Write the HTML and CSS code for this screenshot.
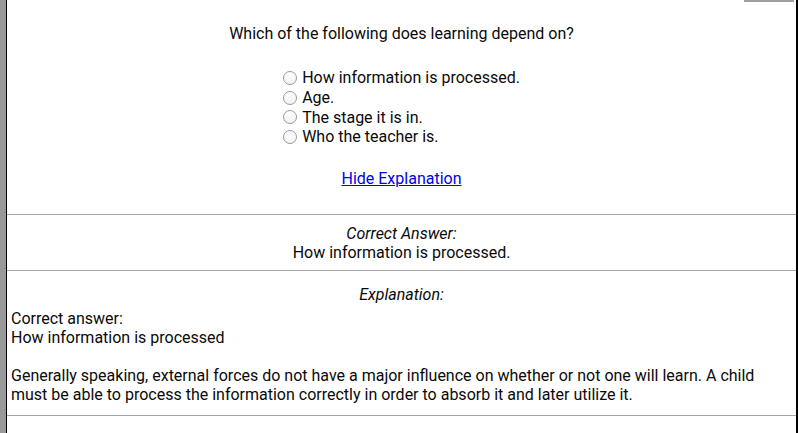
FILE: index.html
```html
<!DOCTYPE html>
<html>
<head>
<meta charset="utf-8">
<link rel="stylesheet" href="styles.css">
</head>
<body>
<div class="page">
  <div class="gutter"></div>
  <main class="main">
    <div class="scroll-thumb"></div>
    <section class="question">
      <p class="prompt">Which of the following does learning depend on?</p>
      <div class="choices-wrap">
        <ul class="choices">
          <li class="choice"><span class="radio"></span><span>How information is processed.</span></li>
          <li class="choice"><span class="radio"></span><span>Age.</span></li>
          <li class="choice"><span class="radio"></span><span>The stage it is in.</span></li>
          <li class="choice"><span class="radio"></span><span>Who the teacher is.</span></li>
        </ul>
      </div>
      <p class="toggle"><a href="#" class="toggle-link">Hide Explanation</a></p>
    </section>
    <section class="answer">
      <div class="label">Correct Answer:</div>
      <div>How information is processed.</div>
    </section>
    <section class="explanation">
      <div class="label">Explanation:</div>
      <div class="explain-body">
        <p class="para">Correct answer:<br>How information is processed</p>
        <p class="para">Generally speaking, external forces do not have a major influence on whether or not one will learn. A child must be able to process the information correctly in order to absorb it and later utilize it.</p>
      </div>
    </section>
  </main>
</div>
</body>
</html>
```

FILE: styles.css
```css
html, body {
  margin: 0;
  padding: 0;
  background: #ffffff;
}
body {
  font-family: Roboto, "Liberation Sans", Arial, sans-serif;
  font-size: 16px;
  line-height: 19px;
  color: #0a0a0a;
}
.page {
  display: flex;
  min-height: 433px;
}
.gutter {
  width: 6px;
  background: #999999;
  border-right: 1px solid #000000;
  flex: none;
}
.main {
  position: relative;
  flex: 1;
  border-right: 2px solid #000000;
  min-width: 0;
}
.scroll-thumb {
  position: absolute;
  top: 0;
  right: 2px;
  width: 50px;
  height: 2px;
  background: #a0a0a0;
}
.question {
  padding-top: 24px;
  padding-bottom: 26px;
  border-bottom: 1px solid #a6a6a6;
  text-align: center;
}
.prompt {
  margin: 0;
}
.choices-wrap {
  margin-top: 25px;
  display: flex;
  justify-content: center;
}
.choices {
  list-style: none;
  margin: 0;
  padding: 0;
  text-align: left;
}
.choice {
  display: flex;
  align-items: center;
  height: 19.7px;
}
.radio {
  width: 12px;
  height: 12px;
  border: 1px solid #9a9a9a;
  border-radius: 50%;
  margin-right: 5px;
  background: linear-gradient(#ffffff, #f2f2f2);
  flex: none;
}
.toggle {
  margin: 22px 0 0;
}
.toggle-link {
  color: #0000ee;
  text-decoration: underline;
}
.answer {
  padding: 9px 0 8px;
  border-bottom: 1px solid #a6a6a6;
  text-align: center;
}
.label {
  font-style: italic;
}
.explanation {
  padding: 14px 0 11px;
  border-bottom: 1px solid #a6a6a6;
  text-align: center;
}
.explain-body {
  text-align: left;
  padding: 5px 4px 0;
}
.para {
  margin: 0;
}
.para + .para {
  margin-top: 19px;
}
```
